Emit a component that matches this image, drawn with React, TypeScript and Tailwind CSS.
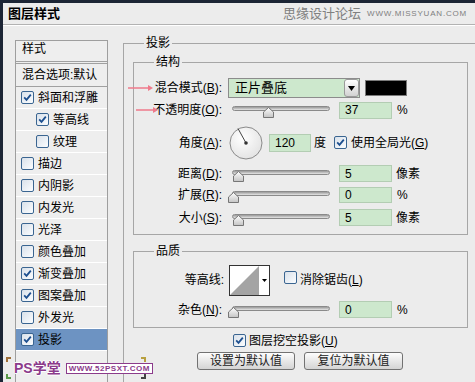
import React from 'react';

function Check({ on }: { on?: boolean }) {
  return (
    <span className="inline-flex h-[13px] w-[13px] shrink-0 items-center justify-center rounded-[2px] border border-[#3a6591] bg-linear-to-br from-[#d9e1ea] to-[#fbfdff]">
      {on && (
        <svg width="9" height="9" viewBox="0 0 9 9">
          <path d="M1.2 4.4 L3.5 6.8 L7.8 1.6" stroke="#1d4f8f" strokeWidth="1.8" fill="none" />
        </svg>
      )}
    </span>
  );
}

function Slider({ pos }: { pos: number }) {
  return (
    <div className="relative h-[16px] w-[98px] shrink-0">
      <div className="absolute left-0 right-0 top-[4px] h-[5px] rounded-full border border-[#8a8a8a] bg-linear-to-b from-[#999999] to-[#e6e6e6]" />
      <svg className="absolute top-[5px]" style={{ left: pos - 5.5 }} width="11" height="11" viewBox="0 0 11 11">
        <defs>
          <linearGradient id="thumb" x1="0" y1="0" x2="0" y2="1">
            <stop offset="0" stopColor="#ffffff" />
            <stop offset="1" stopColor="#c4c4c4" />
          </linearGradient>
        </defs>
        <path d="M5.5 0.5 L10.5 5 V10.5 H0.5 V5 Z" fill="url(#thumb)" stroke="#767676" />
      </svg>
    </div>
  );
}

function Field({ v, className }: { v: string; className: string }) {
  return (
    <div className={`flex shrink-0 items-center border border-[#b3cdb3] bg-[#cde8cd] pl-[5px] text-[12px] ${className}`}>
      {v}
    </div>
  );
}

function Label({ text, k }: { text: string; k: string }) {
  return (
    <span className="w-[88px] shrink-0 text-right whitespace-nowrap">
      {text}(<span className="underline">{k}</span>):
    </span>
  );
}

function Group({ title, className, children }: { title: string; className: string; children?: React.ReactNode }) {
  return (
    <div className={`relative border border-[#a6a6a6] ${className}`}>
      <span className="absolute left-[20px] top-[-8px] bg-[#ececec] px-[2px] leading-[14px]">{title}</span>
      {children}
    </div>
  );
}

const items: { name: string; on: boolean; indent?: boolean; sel?: boolean }[] = [
  { name: '斜面和浮雕', on: true },
  { name: '等高线', on: true, indent: true },
  { name: '纹理', on: false, indent: true },
  { name: '描边', on: false },
  { name: '内阴影', on: false },
  { name: '内发光', on: false },
  { name: '光泽', on: false },
  { name: '颜色叠加', on: false },
  { name: '渐变叠加', on: true },
  { name: '图案叠加', on: true },
  { name: '外发光', on: false },
  { name: '投影', on: true, sel: true },
];

export default function App() {
  return (
    <div className="relative h-[382px] w-[475px] overflow-hidden border-l-[3px] border-t-[3px] border-[#1c2535] bg-[#ececec] font-['Liberation_Sans','Noto_Sans_CJK_SC',sans-serif] text-[12px] text-black">
      {/* title bar */}
      <div className="flex h-[22px] items-center justify-between border-b border-[#b2b2b2] pl-[5px] pr-[8px] shadow-[0_1px_0_#ffffff]">
        <span className="text-[13px] font-bold">图层样式</span>
        <span className="flex items-center text-[#808080]">
          <span className="text-[13px]">思缘设计论坛</span>
          <span className="ml-[6px] text-[8px] tracking-[0.8px]">WWW.MISSYUAN.COM</span>
        </span>
      </div>

      <div className="flex">
        {/* style list */}
        <div className="ml-[12px] mt-[15px] h-[345px] w-[93px] shrink-0 border border-[#9e9e9e] bg-[#eeeeee]">
          <div className="h-[21px] border-b border-[#a0a0a0] pl-[6px] pt-[1px] leading-[14px]">样式</div>
          <div className="mt-[1px] flex h-[23px] items-center border-t border-[#a0a0a0] pl-[6px] whitespace-nowrap">混合选项:默认</div>
          <div className="border-t border-[#a0a0a0]">
            {items.map((it) => (
              <div
                key={it.name}
                className={`flex h-[22px] items-center gap-[4px] border-b border-white ${it.indent ? 'pl-[20px]' : 'pl-[5px]'} ${it.sel ? 'bg-[#6d93c2]' : ''}`}
              >
                <Check on={it.on} />
                <span className="text-[12px] whitespace-nowrap">{it.name}</span>
              </div>
            ))}
          </div>
        </div>

        {/* 投影 group */}
        <div className="relative ml-[15px] mt-[18px] h-[400px] flex-1 border-l border-t border-[#a6a6a6]">
          <span className="absolute left-[20px] top-[-8px] bg-[#ececec] px-[2px] leading-[14px]">投影</span>

          <Group title="结构" className="ml-[9px] mt-[18px] h-[173px] w-[335px]">
            <div className="flex flex-col pt-[15px]">
              <div className="flex h-[20px] items-center">
                <Label text="混合模式" k="B" />
                <div className="ml-[6px] flex h-[20px] w-[132px] items-stretch border border-[#8c8c8c] bg-[#cde8cd]">
                  <span className="flex-1 pl-[6px] text-[13px] leading-[18px]">正片叠底</span>
                  <span className="flex w-[15px] items-center justify-center rounded-[3px] border border-[#9a9a9a] bg-linear-to-b from-white to-[#d2d2d2]">
                    <svg width="7" height="5" viewBox="0 0 7 5">
                      <path d="M0 0 H7 L3.5 5 Z" fill="#000" />
                    </svg>
                  </span>
                </div>
                <div className="ml-[5px] h-[16px] w-[42px] border border-[#7a7a7a] bg-black" />
              </div>

              <div className="flex h-[24px] items-center">
                <Label text="不透明度" k="O" />
                <div className="ml-[10px]">
                  <Slider pos={36} />
                </div>
                <Field v="37" className="ml-[9px] h-[17px] w-[53px]" />
                <span className="ml-[5px]">%</span>
              </div>

              <div className="flex h-[41px] items-center">
                <Label text="角度" k="A" />
                <svg className="ml-[7px] shrink-0" width="34" height="34" viewBox="0 0 34 34">
                  <defs>
                    <radialGradient id="dial" cx="0.4" cy="0.35" r="0.7">
                      <stop offset="0" stopColor="#ffffff" />
                      <stop offset="1" stopColor="#e2e2e2" />
                    </radialGradient>
                  </defs>
                  <circle cx="17" cy="17" r="16" fill="url(#dial)" stroke="#8a8a8a" />
                  <line x1="17" y1="17" x2="9" y2="2.5" stroke="#444" strokeWidth="1" />
                  <circle cx="17" cy="17" r="1.8" fill="#333" />
                </svg>
                <Field v="120" className="ml-[6px] h-[18px] w-[42px]" />
                <span className="ml-[3px]">度</span>
                <span className="ml-[8px]">
                  <Check on />
                </span>
                <span className="ml-[4px] whitespace-nowrap">
                  使用全局光(<span className="underline">G</span>)
                </span>
              </div>

              <div className="flex h-[21px] items-center">
                <Label text="距离" k="D" />
                <div className="ml-[10px]">
                  <Slider pos={6} />
                </div>
                <Field v="5" className="ml-[9px] h-[17px] w-[53px]" />
                <span className="ml-[4px]">像素</span>
              </div>

              <div className="flex h-[22px] items-center">
                <Label text="扩展" k="R" />
                <div className="ml-[10px]">
                  <Slider pos={1} />
                </div>
                <Field v="0" className="ml-[9px] h-[16px] w-[53px]" />
                <span className="ml-[5px]">%</span>
              </div>

              <div className="flex h-[23px] items-center">
                <Label text="大小" k="S" />
                <div className="ml-[10px]">
                  <Slider pos={6} />
                </div>
                <Field v="5" className="ml-[9px] h-[17px] w-[53px]" />
                <span className="ml-[4px]">像素</span>
              </div>
            </div>
          </Group>

          <Group title="品质" className="ml-[9px] mt-[16px] h-[77px] w-[335px]">
            <div className="flex flex-col pt-[13px]">
              <div className="flex h-[30px] items-center">
                <span className="w-[90px] shrink-0 text-right">等高线:</span>
                <div className="ml-[5px] flex h-[31px] w-[41px] shrink-0 border border-[#333333] bg-white">
                  <svg width="29" height="29" viewBox="0 0 29 29">
                    <polygon points="0,29 29,0 29,29" fill="#a4a4a4" />
                  </svg>
                  <div className="flex flex-1 items-center justify-center">
                    <svg width="5" height="3" viewBox="0 0 5 3">
                      <path d="M0 0 H5 L2.5 3 Z" fill="#000" />
                    </svg>
                  </div>
                </div>
                <span className="ml-[14px]">
                  <Check />
                </span>
                <span className="ml-[3px] whitespace-nowrap">
                  消除锯齿(<span className="underline">L</span>)
                </span>
              </div>
              <div className="mt-[6px] flex h-[17px] items-center">
                <Label text="杂色" k="N" />
                <div className="ml-[10px]">
                  <Slider pos={1} />
                </div>
                <Field v="0" className="ml-[9px] h-[17px] w-[53px]" />
                <span className="ml-[5px]">%</span>
              </div>
            </div>
          </Group>

          <div className="ml-[109px] mt-[6px] flex h-[13px] items-center">
            <Check on />
            <span className="ml-[3px] whitespace-nowrap">
              图层挖空投影(<span className="underline">U</span>)
            </span>
          </div>

          <div className="ml-[73px] mt-[5px] flex gap-[9px]">
            <button className="h-[18px] w-[98px] rounded-[3px] border border-[#727272] bg-linear-to-b from-[#fdfdfd] to-[#d4d4d4] text-[12px] leading-[16px] text-[#222222]">
              设置为默认值
            </button>
            <button className="h-[18px] w-[99px] rounded-[3px] border border-[#727272] bg-linear-to-b from-[#fdfdfd] to-[#d4d4d4] text-[12px] leading-[16px] text-[#222222]">
              复位为默认值
            </button>
          </div>
        </div>
      </div>

      {/* annotation arrows */}
      <svg className="absolute left-[123px] top-[80px]" width="36" height="36" viewBox="0 0 36 36">
        <line x1="2" y1="5" x2="24" y2="5" stroke="#ef7a8b" strokeWidth="1.5" />
        <path d="M22 2 L27 5 L22 8 Z" fill="#ef7a8b" />
        <line x1="10" y1="27" x2="29" y2="27" stroke="#ef7a8b" strokeWidth="1.5" />
        <path d="M27 24 L32 27 L27 30 Z" fill="#ef7a8b" />
      </svg>

      {/* watermark */}
      <div className="absolute left-[11px] top-[357px] flex items-center">
        <span className="text-[14px] font-bold leading-[16px] text-[#8b3b8b] [text-shadow:1px_0_#fff,-1px_0_#fff,0_1px_#fff,0_-1px_#fff]">PS学堂</span>
        <span className="ml-[5px] border border-[#8b3b8b] bg-white px-[2px] text-[8px] font-bold leading-[9px] tracking-[0.5px] text-[#8b3b8b]">WWW.52PSXT.COM</span>
      </div>
      <div className="absolute left-[3px] top-[354px] h-[5px] w-[5px] border-l-2 border-t-2 border-[#a0703a]" />
      <div className="absolute left-[3px] top-[371px] h-[5px] w-[5px] border-b-2 border-l-2 border-[#5a9a4a]" />
      <div className="absolute left-[138px] top-[354px] h-[5px] w-[5px] border-r-2 border-t-2 border-[#b8a040]" />
      <div className="absolute left-[138px] top-[371px] h-[5px] w-[5px] border-b-2 border-r-2 border-[#444444]" />
    </div>
  );
}
